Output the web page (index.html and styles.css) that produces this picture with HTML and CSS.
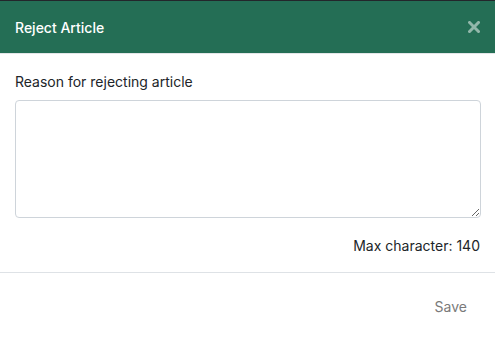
FILE: index.html
```html
<!DOCTYPE html>
<html lang="en">
<head>
<meta charset="utf-8">
<title>Reject Article</title>
<link rel="stylesheet" href="styles.css">
</head>
<body>
<div class="modal">
  <div class="modal-header">
    <h5 class="modal-title">Reject Article</h5>
    <button class="close" type="button" aria-label="Close">
      <svg width="12" height="12" viewBox="0 0 12 12"><path d="M1.5 1.5 L10.5 10.5 M10.5 1.5 L1.5 10.5" stroke="currentColor" stroke-width="3" stroke-linecap="square"/></svg>
    </button>
  </div>
  <div class="modal-body">
    <label class="label" for="reason">Reason for rejecting article</label>
    <textarea id="reason" class="textarea"></textarea>
    <div class="counter">Max character: 140</div>
  </div>
  <div class="modal-footer">
    <button class="btn-save" type="button">Save</button>
  </div>
</div>
</body>
</html>
```
FILE: styles.css
```css
* { box-sizing: border-box; }
html, body { margin: 0; padding: 0; background: #fff; }
body {
  font-family: Inter, "Noto Sans", sans-serif;
  font-size: 14px;
  line-height: 21px;
  color: #212529;
}
.modal {
  border-top: 1px solid #23262b;
}
.modal-header {
  height: 53px;
  background: #246e55;
  display: flex;
  align-items: center;
  justify-content: space-between;
  padding: 0 15px;
  border-bottom: 1px solid #e3e6e8;
}
.modal-title {
  margin: 0;
  font-size: 14px;
  font-weight: 500;
  color: #fff;
  line-height: 21px;
}
.close {
  background: none;
  border: 0;
  padding: 0;
  margin: 0;
  color: rgba(255,255,255,0.5);
  display: flex;
  align-items: center;
  cursor: pointer;
}
.modal-body {
  padding: 17px 14px 16px 15px;
  display: flex;
  flex-direction: column;
}
.label {
  display: block;
  margin-bottom: 8px;
}
.textarea {
  display: block;
  width: 100%;
  height: 118px;
  border: 1px solid #ced4da;
  border-radius: 4px;
  font-family: inherit;
  font-size: 14px;
  padding: 6px 12px;
  resize: vertical;
}
.counter {
  margin-top: 17px;
  text-align: right;
  padding-right: 1px;
}
.modal-footer {
  border-top: 1px solid #dee2e6;
  display: flex;
  justify-content: flex-end;
  padding: 23px 15px;
}
.btn-save {
  background: none;
  border: 0;
  font-family: inherit;
  font-size: 14px;
  line-height: 21px;
  color: #7a7a7a;
  padding: 0 13px 0 12px;
}
```
